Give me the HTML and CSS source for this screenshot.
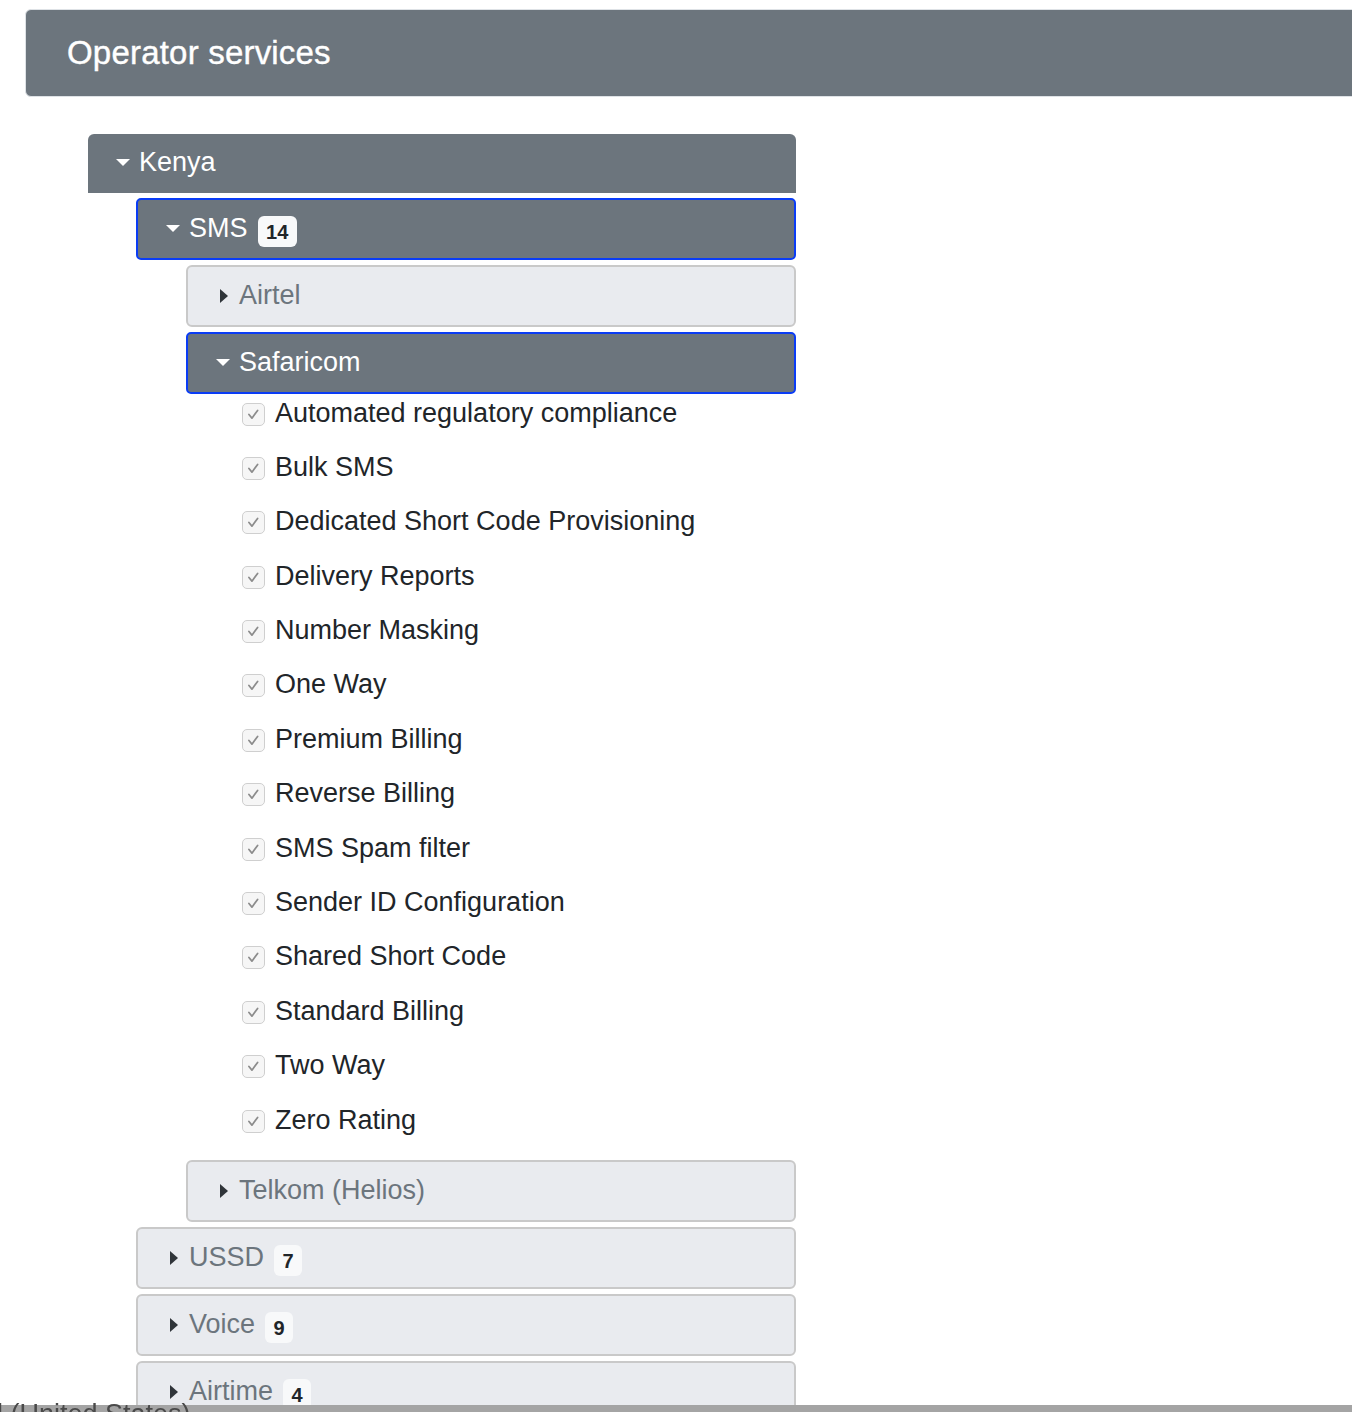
FILE: index.html
```html
<!DOCTYPE html>
<html lang="en">
<head>
<meta charset="utf-8">
<title>Operator services</title>
<link rel="stylesheet" href="styles.css">
</head>
<body>
<div class="page">
  <div class="header">Operator services</div>

  <div class="tree">
    <div class="row dark top"><span class="caret down"></span><span class="label">Kenya</span></div>
    <div class="children lvl1">
      <div class="row dark active"><span class="caret down"></span><span class="label">SMS</span><span class="badge">14</span></div>
      <div class="children lvl2">
        <div class="row light"><span class="caret right"></span><span class="label">Airtel</span></div>
        <div class="row dark active"><span class="caret down"></span><span class="label">Safaricom</span></div>
        <ul class="services">
          <li><span class="check"><svg viewBox="0 0 23 23"><polyline points="6.5,11.5 9.8,15.5 16,7"/></svg></span>Automated regulatory compliance</li>
          <li><span class="check"><svg viewBox="0 0 23 23"><polyline points="6.5,11.5 9.8,15.5 16,7"/></svg></span>Bulk SMS</li>
          <li><span class="check"><svg viewBox="0 0 23 23"><polyline points="6.5,11.5 9.8,15.5 16,7"/></svg></span>Dedicated Short Code Provisioning</li>
          <li><span class="check"><svg viewBox="0 0 23 23"><polyline points="6.5,11.5 9.8,15.5 16,7"/></svg></span>Delivery Reports</li>
          <li><span class="check"><svg viewBox="0 0 23 23"><polyline points="6.5,11.5 9.8,15.5 16,7"/></svg></span>Number Masking</li>
          <li><span class="check"><svg viewBox="0 0 23 23"><polyline points="6.5,11.5 9.8,15.5 16,7"/></svg></span>One Way</li>
          <li><span class="check"><svg viewBox="0 0 23 23"><polyline points="6.5,11.5 9.8,15.5 16,7"/></svg></span>Premium Billing</li>
          <li><span class="check"><svg viewBox="0 0 23 23"><polyline points="6.5,11.5 9.8,15.5 16,7"/></svg></span>Reverse Billing</li>
          <li><span class="check"><svg viewBox="0 0 23 23"><polyline points="6.5,11.5 9.8,15.5 16,7"/></svg></span>SMS Spam filter</li>
          <li><span class="check"><svg viewBox="0 0 23 23"><polyline points="6.5,11.5 9.8,15.5 16,7"/></svg></span>Sender ID Configuration</li>
          <li><span class="check"><svg viewBox="0 0 23 23"><polyline points="6.5,11.5 9.8,15.5 16,7"/></svg></span>Shared Short Code</li>
          <li><span class="check"><svg viewBox="0 0 23 23"><polyline points="6.5,11.5 9.8,15.5 16,7"/></svg></span>Standard Billing</li>
          <li><span class="check"><svg viewBox="0 0 23 23"><polyline points="6.5,11.5 9.8,15.5 16,7"/></svg></span>Two Way</li>
          <li><span class="check"><svg viewBox="0 0 23 23"><polyline points="6.5,11.5 9.8,15.5 16,7"/></svg></span>Zero Rating</li>
        </ul>
        <div class="row light"><span class="caret right"></span><span class="label">Telkom (Helios)</span></div>
      </div>
      <div class="row light"><span class="caret right"></span><span class="label">USSD</span><span class="badge">7</span></div>
      <div class="row light"><span class="caret right"></span><span class="label">Voice</span><span class="badge">9</span></div>
      <div class="row light"><span class="caret right"></span><span class="label">Airtime</span><span class="badge">4</span></div>
    </div>
  </div>
</div>
<div class="footer"><span class="footer-text">l (United States)</span></div>
</body>
</html>
```

FILE: styles.css
```css
html, body {
  margin: 0;
  padding: 0;
  background: #ffffff;
  overflow: hidden;
}

body {
  font-family: "Liberation Sans", Arial, Helvetica, sans-serif;
  color: #212529;
  height: 1412px;
}

.page {
  padding: 9px 0 0 25px;
}

.header {
  height: 88px;
  box-sizing: border-box;
  margin-right: -40px;
  background: #6c757d;
  border: 1px solid #dee2e6;
  border-radius: 6px;
  color: #ffffff;
  font-size: 33px;
  letter-spacing: 0.2px;
  -webkit-text-stroke: 0.4px #ffffff;
  display: flex;
  align-items: center;
  padding-left: 41px;
}

.tree {
  margin: 37px 0 0 63px;
  width: 708px;
  display: flex;
  flex-direction: column;
  gap: 5px;
}

.children {
  display: flex;
  flex-direction: column;
  gap: 5px;
}

.lvl1 {
  margin-left: 48px;
}

.lvl2 {
  margin-left: 50px;
}

.row {
  box-sizing: border-box;
  height: 62px;
  display: flex;
  align-items: center;
  padding-left: 28px;
  font-size: 27px;
  border-radius: 6px;
}

.row.top {
  height: 59px;
  border-radius: 6px 6px 0 0;
  padding-left: 28px;
}

.row.dark {
  background: #6c757d;
  color: #ffffff;
}

.row.active {
  border: 2px solid #0a3cf5;
  border-radius: 5px;
}

.row.light {
  background: #e9ebef;
  border: 2px solid #c9c9c9;
  color: #6c757d;
}

.caret {
  width: 14px;
  height: 14px;
  margin-right: 9px;
  display: flex;
  align-items: center;
  justify-content: center;
  flex-shrink: 0;
}

.caret::before {
  content: "";
  display: block;
  width: 0;
  height: 0;
}

.caret.down::before {
  border-left: 7px solid transparent;
  border-right: 7px solid transparent;
  border-top: 7px solid #ffffff;
  margin-top: -2px;
}

.caret.right::before {
  border-top: 7px solid transparent;
  border-bottom: 7px solid transparent;
  border-left: 8.5px solid #2f3439;
  margin-top: -1px;
  margin-left: 2px;
}

.label {
  line-height: 1;
  padding-bottom: 2px;
}

.badge {
  margin-left: 10px;
  margin-top: 4px;
  height: 31px;
  padding: 0 8.5px;
  box-sizing: border-box;
  background: #f8f9fa;
  color: #212529;
  font-weight: bold;
  font-size: 20px;
  border-radius: 6px;
  display: flex;
  align-items: center;
  padding-top: 3px;
}

.services {
  list-style: none;
  margin: -5px 0 16px 0;
  padding: 0 0 0 56px;
  display: flex;
  flex-direction: column;
  gap: 16.4px;
}

.services li {
  height: 38px;
  display: flex;
  align-items: center;
  font-size: 27px;
  color: #212529;
}

.check {
  width: 23px;
  height: 23px;
  box-sizing: border-box;
  border: 1px solid #cfcfcf;
  border-radius: 5px;
  background: #f6f6f6;
  margin-right: 10px;
  margin-top: 2px;
  flex-shrink: 0;
  display: block;
}

.check svg {
  display: block;
  width: 21px;
  height: 21px;
}

.check polyline {
  fill: none;
  stroke: #8c8c8c;
  stroke-width: 1.9;
  stroke-linecap: round;
  stroke-linejoin: round;
}

.footer {
  position: fixed;
  left: 0;
  right: 0;
  bottom: 0;
  height: 12px;
  overflow: hidden;
  background: linear-gradient(to bottom, transparent 0, transparent 5px, #a4a4a4 5px);
}

.footer-text {
  display: block;
  margin: -1px 0 0 -3px;
  font-size: 27px;
  line-height: 30px;
  color: #4a4a4a;
  white-space: nowrap;
}
```
